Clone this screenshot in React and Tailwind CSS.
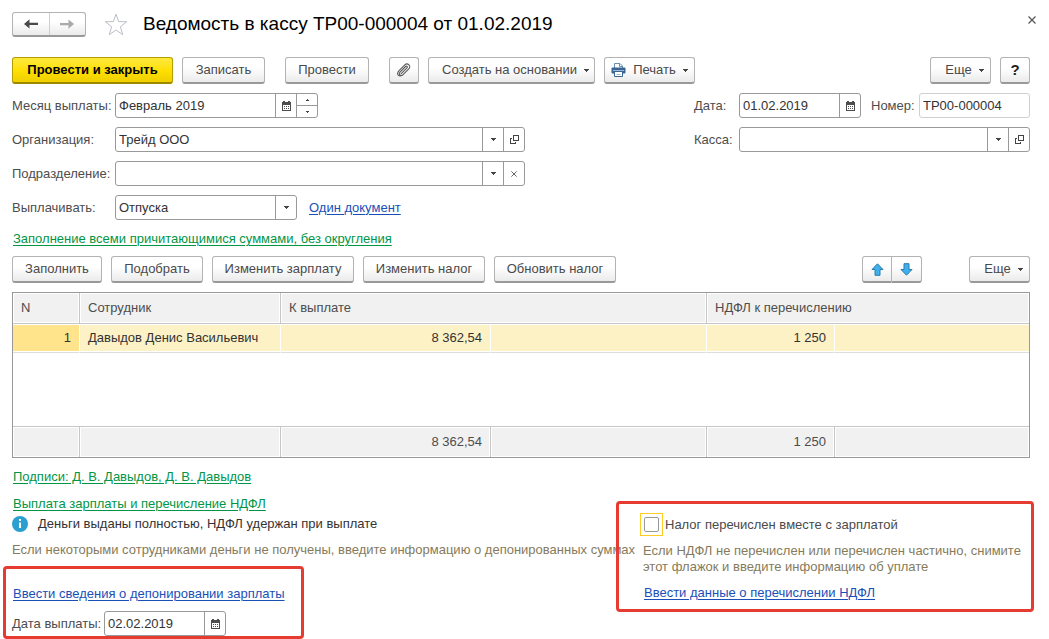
import { useState } from 'react';

const fieldBox = 'flex h-[25px] overflow-hidden rounded-[3px] border border-[#999999] bg-white';
const fieldInput = 'min-w-0 flex-1 bg-transparent px-[3px] text-[#333333] outline-none';
const greenLink = 'text-[#009646] underline decoration-1 underline-offset-2';
const blueLink = 'text-[#1a4fb8] underline decoration-1 underline-offset-2';

function CaretIcon() {
    return (
        <svg width="5" height="3" viewBox="0 0 5 3" className="shrink-0" shapeRendering="crispEdges">
            <path d="M0 0h5v1H0zM1 1h3v1H1zM2 2h1v1H2z" fill="#444444" />
        </svg>
    );
}

function CalendarIcon() {
    return (
        <svg width="9" height="10" viewBox="0 0 9 10" shapeRendering="crispEdges">
            <path d="M1 0h2v1h3V0h2v1h1v9H0V1h1z" fill="#4d4d4d" />
            <path d="M1 4h7v5H1z" fill="#ffffff" />
            <path d="M2 5h1v1H2zM4 5h1v1H4zM6 5h1v1H6zM2 7h1v1H2zM4 7h1v1H4zM6 7h1v1H6z" fill="#4d4d4d" />
        </svg>
    );
}

function OpenIcon() {
    return (
        <svg width="9" height="9" viewBox="0 0 9 9" fill="none" stroke="#444444" shapeRendering="crispEdges">
            <path d="M3.5 0.5h5v5h-5z" />
            <path d="M2 3.5H0.5v5h5V7" />
        </svg>
    );
}

function CrossIcon({ size }) {
    return (
        <svg width={size} height={size} viewBox="0 0 8 8" fill="none" stroke="#555555" strokeWidth="1.2">
            <path d="M0.5 0.5l7 7M7.5 0.5l-7 7" />
        </svg>
    );
}

function NavArrow({ color, flip }) {
    return (
        <svg width="14" height="10" viewBox="0 0 14 10" className={flip ? 'rotate-180' : ''}>
            <path d="M5.5 0.2v3.5H14v2.4H5.5v3.5L0 4.9z" fill={color} />
        </svg>
    );
}

function MoveArrow({ flip }) {
    return (
        <svg width="13" height="13" viewBox="0 0 13 13" className={flip ? 'rotate-180' : ''}>
            <path d="M6.5 0.8L12 6.5H9v5.8H4V6.5H1z" fill="#3fb0ec" stroke="#2b7cab" />
        </svg>
    );
}

function ClipIcon() {
    return (
        <svg width="14" height="14" viewBox="0 0 14 14" fill="none" stroke="#5a5a5a" strokeWidth="1.1" strokeLinecap="round">
            <path d="M4.2 10.6L10 4.8c.9-.9-.4-2.3-1.4-1.3L3 9.1c-2 2 .8 4.8 2.8 2.8l6-6c2.8-2.8-1.2-6.8-4-4L2.3 7.4C-.8 10.5 1 13 3 13" />
        </svg>
    );
}

function PrinterIcon() {
    return (
        <svg width="15" height="14" viewBox="0 0 15 14">
            <path d="M3.5 5V0.5h5.5L11.5 3v2" fill="#ffffff" stroke="#6f8fae" />
            <path d="M8.5 0.5V3.5h3" fill="none" stroke="#6f8fae" />
            <rect x="0.5" y="4.5" width="14" height="6" rx="1" fill="#3a6491" />
            <path d="M2 7.5h11" stroke="#9fb8d1" />
            <path d="M3.5 8.5h8v5h-8z" fill="#ffffff" stroke="#3a6491" />
            <path d="M5.5 11.5h4" stroke="#9fb8d1" />
        </svg>
    );
}

function Btn({ className, children, ...props }) {
    return (
        <button
            type="button"
            className={`flex h-[27px] shrink-0 items-center justify-center whitespace-nowrap rounded-[3px] border border-[#b3b3b3] border-b-2 border-b-[#999999] bg-linear-to-b from-white from-40% to-[#ebebeb] text-[#4a4a4a] ${className}`}
            {...props}
        >
            {children}
        </button>
    );
}

function FieldButton({ label, children }) {
    return (
        <button type="button" aria-label={label} className="flex w-[21px] shrink-0 items-center justify-center border-l border-[#999999]">
            {children}
        </button>
    );
}

function DateField({ id, value, className }) {
    return (
        <div className={`${fieldBox} ${className}`}>
            <input id={id} type="text" defaultValue={value} className={fieldInput} />
            <FieldButton label="Выбрать дату">
                <CalendarIcon />
            </FieldButton>
        </div>
    );
}

function PayrollTable({ rows }) {
    const head = 'h-[31px] border-r border-b border-[#c6c6c6] bg-[#f1f1f1] px-2 text-left font-normal shadow-[inset_0_0_0_1px_#ffffff] last:border-r-0';
    const cell = 'h-[29px] border-r border-b border-r-white border-b-[#dddddd] px-2 text-[#333333] shadow-[inset_0_1px_#ffffff,inset_0_-1px_#ffffff] last:border-r-0';
    const foot = 'h-[31px] border-t border-r border-[#c6c6c6] bg-[#f1f1f1] px-2 text-right shadow-[inset_0_0_0_1px_#ffffff] last:border-r-0';

    return (
        <div className="mt-[9px] border border-[#999999]">
            <table className="w-full table-fixed border-separate border-spacing-0">
                <colgroup>
                    <col className="w-[67px]" />
                    <col className="w-[201px]" />
                    <col className="w-[210px]" />
                    <col className="w-[216px]" />
                    <col className="w-[128px]" />
                    <col />
                </colgroup>
                <thead>
                    <tr>
                        <th className={head}>N</th>
                        <th className={head}>Сотрудник</th>
                        <th className={head} colSpan={2}>К выплате</th>
                        <th className={head} colSpan={2}>НДФЛ к перечислению</th>
                    </tr>
                </thead>
                <tbody>
                    {rows.map((row, i) => (
                        <tr key={row.name} className="bg-[#fdf1c6]">
                            <td className={`${cell} bg-[#ffe48c] text-right`}>{i + 1}</td>
                            <td className={cell}>{row.name}</td>
                            <td className={`${cell} text-right`}>{row.pay}</td>
                            <td className={cell}></td>
                            <td className={`${cell} text-right`}>{row.tax}</td>
                            <td className={cell}></td>
                        </tr>
                    ))}
                    <tr>
                        <td colSpan={6} className="h-[73px]"></td>
                    </tr>
                </tbody>
                <tfoot>
                    <tr>
                        <td className={foot}></td>
                        <td className={foot}></td>
                        <td className={foot}>8 362,54</td>
                        <td className={foot}></td>
                        <td className={foot}>1 250</td>
                        <td className={foot}></td>
                    </tr>
                </tfoot>
            </table>
        </div>
    );
}

export default function App() {
    const [taxPaid, setTaxPaid] = useState(false);
    const rows = [{ name: 'Давыдов Денис Васильевич', pay: '8 362,54', tax: '1 250' }];

    return (
        <div className="bg-white font-['Liberation_Sans',Arial,sans-serif] text-[13px] leading-4 text-[#4d4d4d]">
            <div className="pt-[11px] pr-[19px] pl-3">
                <header className="flex h-[26px] items-center">
                    <div className="flex h-[25px] w-[74px] overflow-hidden rounded-[3px] border border-[#b3b3b3] border-b-2 border-b-[#999999] bg-linear-to-b from-white from-40% to-[#ebebeb]">
                        <button type="button" aria-label="Назад" className="flex flex-1 items-center justify-center">
                            <NavArrow color="#4a4a4a" />
                        </button>
                        <button type="button" aria-label="Вперед" className="flex flex-1 items-center justify-center border-l border-[#d0d0d0]">
                            <NavArrow color="#a9a9a9" flip />
                        </button>
                    </div>
                    <button type="button" aria-label="В избранное" className="ml-[18px]">
                        <svg width="24" height="23" viewBox="0 0 24 23" fill="none" stroke="#b9bec6">
                            <path d="M12 1.2l2.7 7.5h8l-6.3 5 2.3 8L12 17l-6.7 4.7 2.3-8-6.3-5h8z" />
                        </svg>
                    </button>
                    <h1 className="ml-[15px] flex-1 text-[19px] leading-6 text-black">Ведомость в кассу ТР00-000004 от 01.02.2019</h1>
                    <button type="button" aria-label="Закрыть" className="-mr-[7px] mb-2 p-px">
                        <CrossIcon size={8} />
                    </button>
                </header>

                <div className="mt-5 flex gap-[9px]">
                    <button
                        type="button"
                        className="h-[27px] w-[161px] shrink-0 rounded-[3px] border border-[#b59f00] border-b-2 border-b-[#9c8900] bg-linear-to-b from-[#ffe939] via-[#ffe000] to-[#efcf00] font-bold whitespace-nowrap text-black"
                    >
                        Провести и закрыть
                    </button>
                    <Btn className="w-[83px]">Записать</Btn>
                    <Btn className="ml-[11px] w-[84px]">Провести</Btn>
                    <Btn className="ml-[11px] w-[30px]" aria-label="Файлы">
                        <ClipIcon />
                    </Btn>
                    <Btn className="w-[167px] gap-[7px] pl-2">
                        Создать на основании <CaretIcon />
                    </Btn>
                    <Btn className="w-[91px] gap-[7px]">
                        <PrinterIcon /> Печать <CaretIcon />
                    </Btn>
                    <Btn className="ml-auto w-[61px] gap-[7px] pl-2">
                        Еще <CaretIcon />
                    </Btn>
                    <Btn className="w-[30px]">
                        <span className="text-[15px] font-bold text-[#222222]">?</span>
                    </Btn>
                </div>

                <div className="mt-[9px] flex justify-between">
                    <div className="flex w-[513px] flex-col gap-[9px]">
                        <div className="flex items-center">
                            <label htmlFor="month" className="w-[103px]">Месяц выплаты:</label>
                            <div className={`${fieldBox} w-[203px]`}>
                                <input id="month" type="text" defaultValue="Февраль 2019" className={fieldInput} />
                                <FieldButton label="Выбрать месяц">
                                    <CalendarIcon />
                                </FieldButton>
                                <div className="flex w-[21px] flex-col border-l border-[#999999]">
                                    <button type="button" aria-label="Следующий месяц" className="flex flex-1 items-center justify-center border-b border-[#999999]">
                                        <svg width="3" height="2" viewBox="0 0 3 2" shapeRendering="crispEdges">
                                            <path d="M1 0h1v1H1zM0 1h3v1H0z" fill="#444444" />
                                        </svg>
                                    </button>
                                    <button type="button" aria-label="Предыдущий месяц" className="flex flex-1 items-center justify-center">
                                        <svg width="3" height="2" viewBox="0 0 3 2" shapeRendering="crispEdges">
                                            <path d="M0 0h3v1H0zM1 1h1v1H1z" fill="#444444" />
                                        </svg>
                                    </button>
                                </div>
                            </div>
                        </div>
                        <div className="flex items-center">
                            <label htmlFor="org" className="w-[103px]">Организация:</label>
                            <div className={`${fieldBox} flex-1`}>
                                <input id="org" type="text" defaultValue="Трейд ООО" className={fieldInput} />
                                <FieldButton label="Выбрать организацию">
                                    <CaretIcon />
                                </FieldButton>
                                <FieldButton label="Открыть организацию">
                                    <OpenIcon />
                                </FieldButton>
                            </div>
                        </div>
                        <div className="flex items-center">
                            <label htmlFor="dept" className="w-[103px]">Подразделение:</label>
                            <div className={`${fieldBox} flex-1`}>
                                <input id="dept" type="text" className={fieldInput} />
                                <FieldButton label="Выбрать подразделение">
                                    <CaretIcon />
                                </FieldButton>
                                <FieldButton label="Очистить">
                                    <CrossIcon size={6} />
                                </FieldButton>
                            </div>
                        </div>
                        <div className="flex items-center">
                            <label htmlFor="kind" className="w-[103px]">Выплачивать:</label>
                            <div className={`${fieldBox} relative w-[182px]`}>
                                <select id="kind" className="w-full appearance-none bg-transparent px-[3px] text-[#333333] outline-none">
                                    <option>Отпуска</option>
                                </select>
                                <span className="pointer-events-none absolute inset-y-0 right-0 flex w-[21px] items-center justify-center border-l border-[#999999]">
                                    <CaretIcon />
                                </span>
                            </div>
                            <a href="#document" className={`ml-3 ${blueLink}`}>Один документ</a>
                        </div>
                    </div>

                    <div className="flex w-[336px] flex-col gap-[9px]">
                        <div className="flex items-center">
                            <label htmlFor="date" className="w-[45px]">Дата:</label>
                            <DateField id="date" value="01.02.2019" className="w-[122px]" />
                            <label htmlFor="number" className="ml-[10px] w-12">Номер:</label>
                            <input
                                id="number"
                                type="text"
                                defaultValue="ТР00-000004"
                                className="h-[25px] min-w-0 flex-1 rounded-[3px] border border-[#d0d0d0] px-[3px] text-[#333333] outline-none"
                            />
                        </div>
                        <div className="flex items-center">
                            <label htmlFor="cash" className="w-[45px]">Касса:</label>
                            <div className={`${fieldBox} flex-1`}>
                                <input id="cash" type="text" className={fieldInput} />
                                <FieldButton label="Выбрать кассу">
                                    <CaretIcon />
                                </FieldButton>
                                <FieldButton label="Открыть кассу">
                                    <OpenIcon />
                                </FieldButton>
                            </div>
                        </div>
                    </div>
                </div>

                <div className="mt-[11px] pl-px">
                    <a href="#fill" className={greenLink}>Заполнение всеми причитающимися суммами, без округления</a>
                </div>

                <div className="mt-[9px] flex gap-[9px]">
                    <Btn className="w-[90px]">Заполнить</Btn>
                    <Btn className="w-[92px]">Подобрать</Btn>
                    <Btn className="w-[142px]">Изменить зарплату</Btn>
                    <Btn className="w-[122px]">Изменить налог</Btn>
                    <Btn className="w-[122px]">Обновить налог</Btn>
                    <div className="ml-auto flex">
                        <Btn className="w-[30px] rounded-r-none" aria-label="Переместить вверх">
                            <MoveArrow />
                        </Btn>
                        <Btn className="w-[30px] rounded-l-none border-l-0" aria-label="Переместить вниз">
                            <MoveArrow flip />
                        </Btn>
                    </div>
                    <Btn className="ml-[38px] w-[61px] gap-[7px] pl-2">
                        Еще <CaretIcon />
                    </Btn>
                </div>

                <PayrollTable rows={rows} />

                <div className="mt-[11px] pl-px">
                    <a href="#signatures" className={greenLink}>Подписи: Д. В. Давыдов, Д. В. Давыдов</a>
                </div>
            </div>

            <div className="mt-[11px] flex items-start pr-[15px] pl-[3px]">
                <div className="min-w-0 flex-1 whitespace-nowrap">
                    <div className="pl-[9px]">
                        <a href="#payment" className={`ml-px ${greenLink}`}>Выплата зарплаты и перечисление НДФЛ</a>
                        <p className="mt-1 flex items-center text-[#333333]">
                            <svg width="16" height="16" viewBox="0 0 16 16" className="mr-[10px]">
                                <circle cx="8" cy="8" r="8" fill="#2a9fd0" />
                                <path d="M7 3h2v2H7zM7 6.5h2V12H7z" fill="#ffffff" />
                            </svg>
                            Деньги выданы полностью, НДФЛ удержан при выплате
                        </p>
                        <p className="mt-[10px] text-[#857b5c]">
                            Если некоторыми сотрудниками деньги не получены, введите информацию о депонированных суммах
                        </p>
                    </div>
                    <div className="mt-2 w-[301px] rounded-[4px] border-3 border-[#e63b31] pt-[17px] pl-[6px]">
                        <a href="#deposit" className={`ml-px ${blueLink}`}>Ввести сведения о депонировании зарплаты</a>
                        <div className="mt-[9px] flex items-center">
                            <label htmlFor="paydate" className="w-[92px]">Дата выплаты:</label>
                            <DateField id="paydate" value="02.02.2019" className="w-[122px]" />
                        </div>
                    </div>
                </div>

                <div className="mt-[5px] h-[111px] w-[418px] shrink-0 rounded-[4px] border-3 border-[#e63b31] pt-[9px] pl-[21px]">
                    <label className="flex items-center gap-[2px] text-[#4a4a4a]">
                        <span className="flex size-[23px] items-center justify-center border border-[#ffcc22]">
                            <input
                                type="checkbox"
                                checked={taxPaid}
                                onChange={(e) => setTaxPaid(e.target.checked)}
                                className="size-[15px] appearance-none rounded-[2px] border border-[#999999] bg-white outline-none checked:bg-[#4a4a4a]"
                            />
                        </span>
                        Налог перечислен вместе с зарплатой
                    </label>
                    <p className="mt-[7px] pl-[3px] text-[#857b5c]">
                        Если НДФЛ не перечислен или перечислен частично, снимите
                        <br />
                        этот флажок и введите информацию об уплате
                    </p>
                    <div className="mt-[10px] pl-1">
                        <a href="#tax" className={blueLink}>Ввести данные о перечислении НДФЛ</a>
                    </div>
                </div>
            </div>
        </div>
    );
}
